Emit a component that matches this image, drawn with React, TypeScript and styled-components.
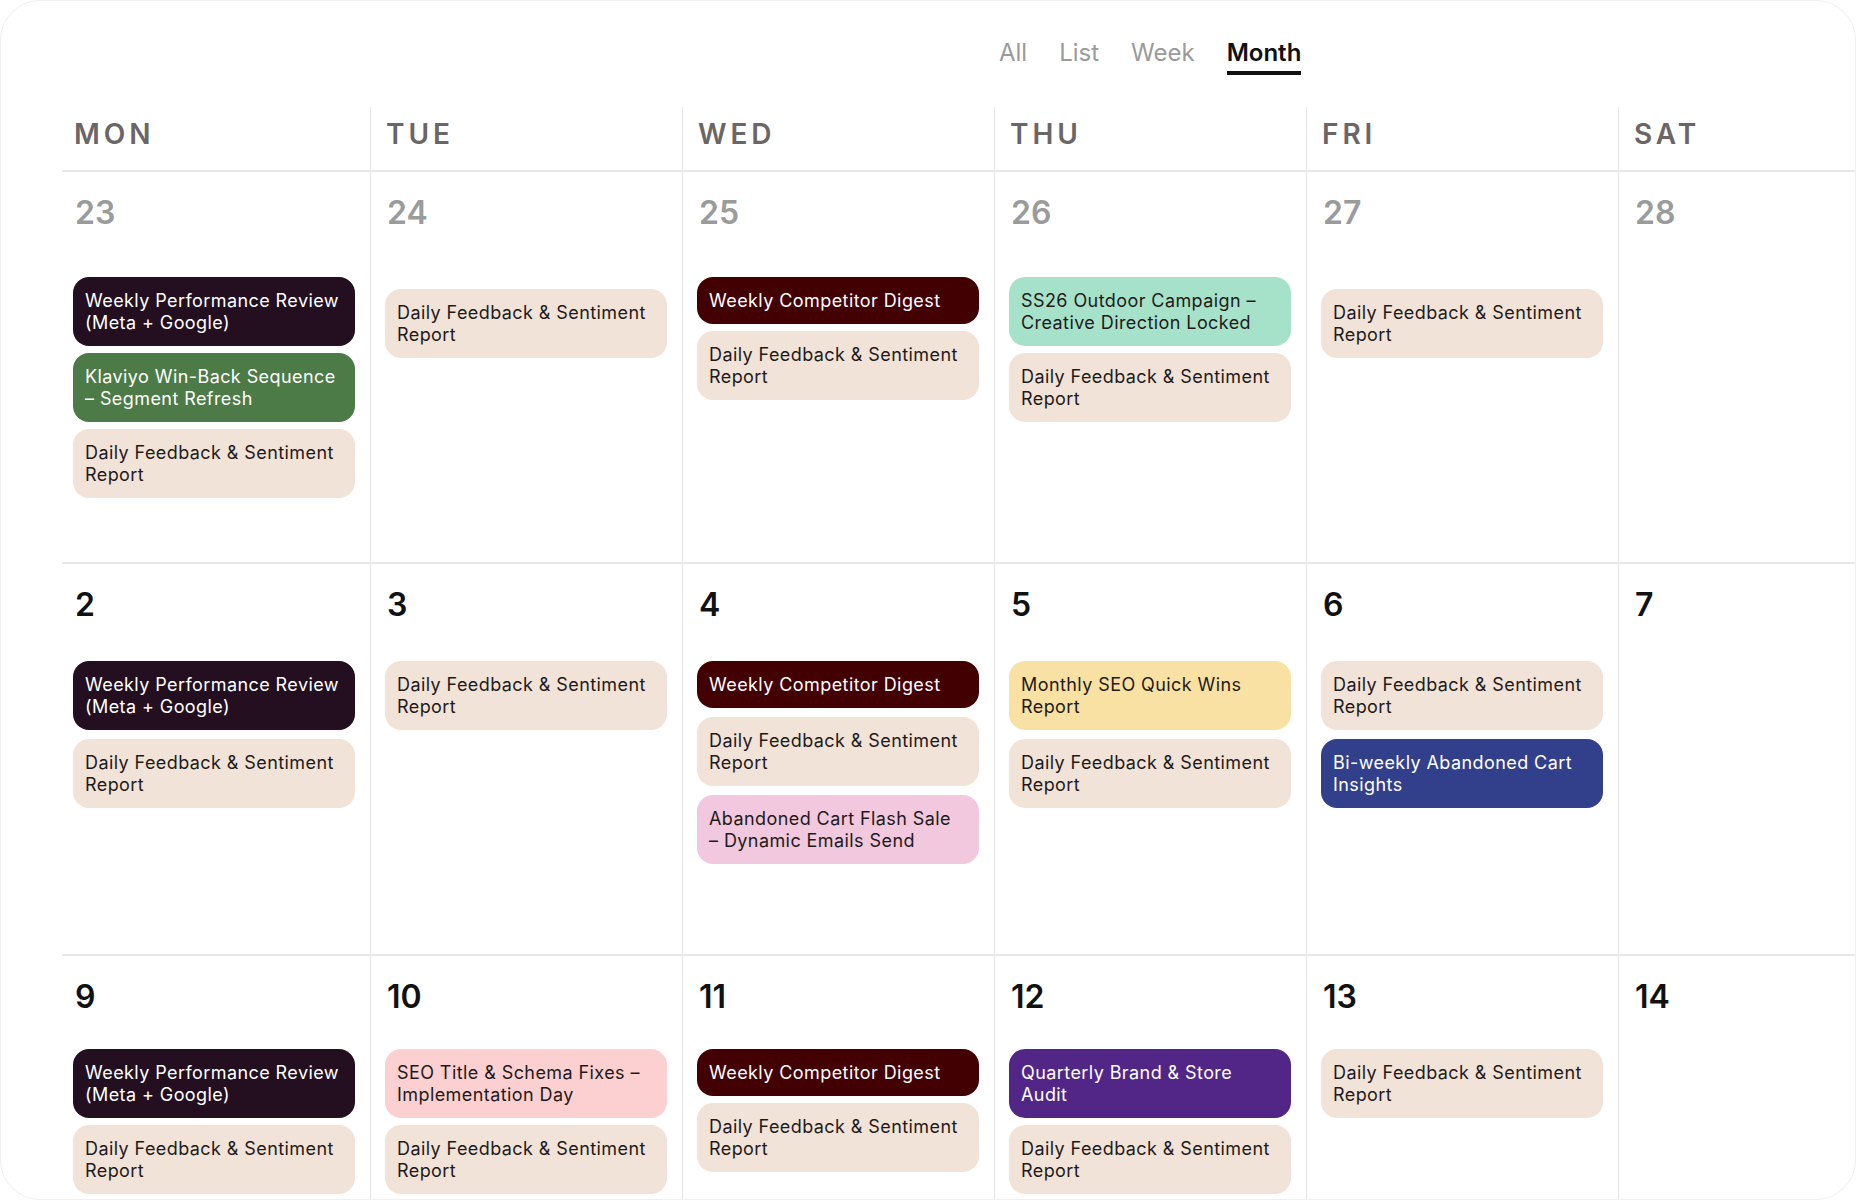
import React from 'react';
import styled, { createGlobalStyle } from 'styled-components';

type Kind =
  | 'perf'
  | 'klaviyo'
  | 'daily'
  | 'competitor'
  | 'ss26'
  | 'seoWins'
  | 'flash'
  | 'biweekly'
  | 'seoFix'
  | 'quarterly';

const palette: Record<Kind, { bg: string; fg: string }> = {
  perf: { bg: '#230f1f', fg: '#ffffff' },
  klaviyo: { bg: '#4c7b47', fg: '#ffffff' },
  daily: { bg: '#f1e3d8', fg: '#1f1a1a' },
  competitor: { bg: '#430003', fg: '#ffffff' },
  ss26: { bg: '#a6e2c9', fg: '#1f1a1a' },
  seoWins: { bg: '#f8e1a2', fg: '#1f1a1a' },
  flash: { bg: '#f1c8de', fg: '#1f1a1a' },
  biweekly: { bg: '#323f8a', fg: '#ffffff' },
  seoFix: { bg: '#fcd0d0', fg: '#1f1a1a' },
  quarterly: { bg: '#522686', fg: '#ffffff' },
};

type Ev = { kind: Kind; title: string };
type Day = { date: number; events: Ev[]; shift?: boolean };
type Week = { muted?: boolean; offset: number; gap: number; days: Day[] };

const PERF: Ev = { kind: 'perf', title: 'Weekly Performance Review (Meta + Google)' };
const DAILY: Ev = { kind: 'daily', title: 'Daily Feedback & Sentiment Report' };
const COMP: Ev = { kind: 'competitor', title: 'Weekly Competitor Digest' };

const weeks: Week[] = [
  {
    muted: true,
    offset: 48,
    gap: 7,
    days: [
      {
        date: 23,
        events: [PERF, { kind: 'klaviyo', title: 'Klaviyo Win-Back Sequence – Segment Refresh' }, DAILY],
      },
      { date: 24, events: [DAILY], shift: true },
      { date: 25, events: [COMP, DAILY] },
      {
        date: 26,
        events: [{ kind: 'ss26', title: 'SS26 Outdoor Campaign – Creative Direction Locked' }, DAILY],
      },
      { date: 27, events: [DAILY], shift: true },
      { date: 28, events: [] },
    ],
  },
  {
    offset: 40,
    gap: 9,
    days: [
      { date: 2, events: [PERF, DAILY] },
      { date: 3, events: [DAILY] },
      {
        date: 4,
        events: [COMP, DAILY, { kind: 'flash', title: 'Abandoned Cart Flash Sale – Dynamic Emails Send' }],
      },
      { date: 5, events: [{ kind: 'seoWins', title: 'Monthly SEO Quick Wins Report' }, DAILY] },
      { date: 6, events: [DAILY, { kind: 'biweekly', title: 'Bi-weekly Abandoned Cart Insights' }] },
      { date: 7, events: [] },
    ],
  },
  {
    offset: 36,
    gap: 7,
    days: [
      { date: 9, events: [PERF, DAILY] },
      {
        date: 10,
        events: [{ kind: 'seoFix', title: 'SEO Title & Schema Fixes – Implementation Day' }, DAILY],
      },
      { date: 11, events: [COMP, DAILY] },
      { date: 12, events: [{ kind: 'quarterly', title: 'Quarterly Brand & Store Audit' }, DAILY] },
      { date: 13, events: [DAILY] },
      { date: 14, events: [] },
    ],
  },
];

const dayNames = ['MON', 'TUE', 'WED', 'THU', 'FRI', 'SAT'];
const tabs = ['All', 'List', 'Week', 'Month'];

const GlobalStyle = createGlobalStyle`
  html, body {
    margin: 0;
    padding: 0;
    background: #ffffff;
  }
  body {
    font-family: Inter, "Noto Sans", "Liberation Sans", sans-serif;
    -webkit-font-smoothing: antialiased;
  }
  *, *::before, *::after {
    box-sizing: border-box;
  }
`;

const Card = styled.div`
  width: 1856px;
  height: 1200px;
  border: 1px solid #f0f0f0;
  border-radius: 40px;
  overflow: hidden;
  background: #ffffff;
  display: flex;
  flex-direction: column;
`;

const TabBar = styled.nav`
  height: 106px;
  flex: none;
  display: flex;
  align-items: flex-start;
  gap: 32px;
  padding: 40px 0 0 998px;
`;

const Tab = styled.button<{ $active?: boolean }>`
  appearance: none;
  background: none;
  border: none;
  margin: 0;
  padding: 0 0 6px;
  font-family: Inter, "Noto Sans", sans-serif;
  font-size: 24px;
  line-height: 24px;
  font-weight: ${(p) => (p.$active ? 600 : 400)};
  color: ${(p) => (p.$active ? '#111111' : '#9a9a9a')};
  border-bottom: 4px solid ${(p) => (p.$active ? '#111111' : 'transparent')};
  cursor: pointer;
`;

const Calendar = styled.div`
  margin-left: 57px;
  display: flex;
  flex-direction: column;
`;

const ruledBottom = `
  padding-bottom: 2px;
  background: linear-gradient(#e8e8e8, #e8e8e8) no-repeat 4px 100% / calc(100% - 4px) 2px;
`;

const HeadRow = styled.div`
  display: grid;
  grid-template-columns: repeat(6, 312px);
  ${ruledBottom}
`;

const DayHead = styled.div<{ $first?: boolean }>`
  height: 63px;
  padding: 13px 0 0 ${(p) => (p.$first ? 16 : 15)}px;
  border-left: ${(p) => (p.$first ? 'none' : '1px solid #e6e6e6')};
  font-size: 28px;
  line-height: 28px;
  font-weight: 600;
  letter-spacing: 0.14em;
  color: #6b6665;
`;

const WeekRow = styled.div`
  display: grid;
  grid-template-columns: repeat(6, 312px);
  ${ruledBottom}
`;

const DayCell = styled.div<{ $first?: boolean }>`
  height: 390px;
  padding: 25px 15px 0 ${(p) => (p.$first ? 15 : 14)}px;
  border-left: ${(p) => (p.$first ? 'none' : '1px solid #e6e6e6')};
  display: flex;
  flex-direction: column;
`;

const DateNum = styled.div<{ $muted?: boolean }>`
  padding-left: 2px;
  font-size: 32px;
  line-height: 32px;
  font-weight: 600;
  color: ${(p) => (p.$muted ? '#9a9c9b' : '#111111')};
`;

const EventList = styled.div<{ $offset: number; $gap: number }>`
  margin-top: ${(p) => p.$offset}px;
  display: flex;
  flex-direction: column;
  gap: ${(p) => p.$gap}px;
`;

const EventChip = styled.div<{ $kind: Kind }>`
  background: ${(p) => palette[p.$kind].bg};
  color: ${(p) => palette[p.$kind].fg};
  border-radius: 16px;
  padding: 13px 14px 12px 12px;
  font-size: 18px;
  line-height: 22px;
  letter-spacing: 0.42px;
  font-weight: 400;
`;

export default function App() {
  return (
    <>
      <GlobalStyle />
      <Card>
        <TabBar>
          {tabs.map((t) => (
            <Tab key={t} $active={t === 'Month'}>
              {t}
            </Tab>
          ))}
        </TabBar>
        <Calendar>
          <HeadRow>
            {dayNames.map((d, i) => (
              <DayHead key={d} $first={i === 0}>
                {d}
              </DayHead>
            ))}
          </HeadRow>
          {weeks.map((w, wi) => (
            <WeekRow key={wi}>
              {w.days.map((d, di) => (
                <DayCell key={d.date} $first={di === 0}>
                  <DateNum $muted={w.muted}>{d.date}</DateNum>
                  {d.events.length > 0 && (
                    <EventList $offset={w.offset + (d.shift ? 12 : 0)} $gap={w.gap}>
                      {d.events.map((e, ei) => (
                        <EventChip key={ei} $kind={e.kind}>
                          {e.title}
                        </EventChip>
                      ))}
                    </EventList>
                  )}
                </DayCell>
              ))}
            </WeekRow>
          ))}
        </Calendar>
      </Card>
    </>
  );
}
